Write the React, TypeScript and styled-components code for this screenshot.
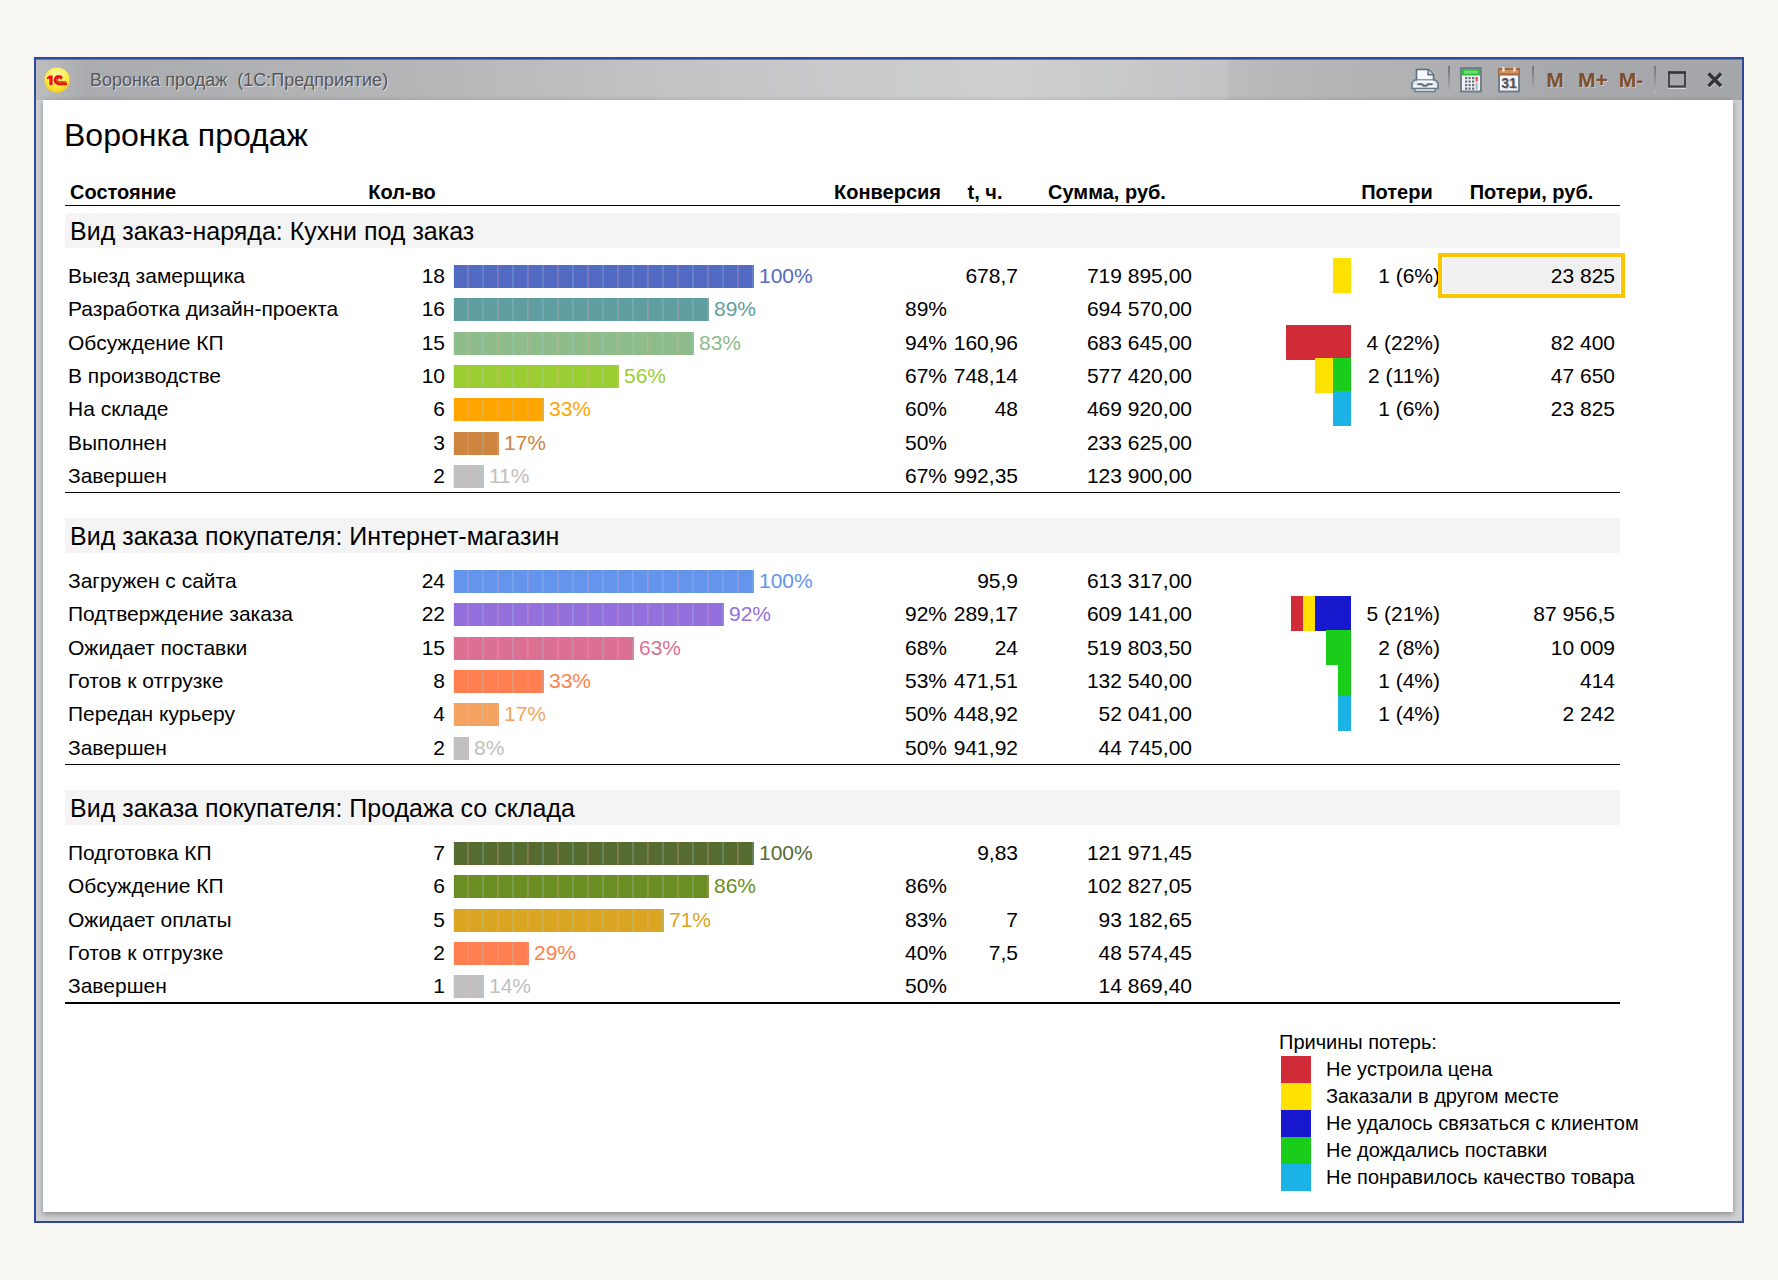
import React from "react";
import styled, { createGlobalStyle } from "styled-components";

const GlobalStyle = createGlobalStyle`
  *, *::before, *::after { box-sizing: border-box; }
  body {
    margin: 0;
    background: #f8f7f3;
    color: #000;
    font-family: "Liberation Sans", Arial, sans-serif;
    font-size: 21px;
  }
`;

const Page = styled.main`
  padding: 57px 34px;
  min-width: 1560px;
`;

const AppWindow = styled.section`
  border: 2px solid #2f4a9c;
  background: #cfd1d3;
  overflow: hidden;
`;

const TitleBar = styled.header`
  display: flex;
  align-items: center;
  height: 41px;
  padding: 0 8px;
  border-top: 1px solid #77797c;
  background: linear-gradient(
    90deg,
    #bcbdbe 0%,
    #a9abae 3%,
    #b5b6b8 22%,
    #c6c7c8 42%,
    #cfcfcf 57%,
    #c3c4c5 69.8%,
    #babbbc 70%,
    #a6a8ab 90%,
    #a5a7aa 100%
  );
`;

const WindowTitle = styled.div`
  margin-left: 20px;
  font-size: 18px;
  line-height: 24px;
  color: #56575c;
  text-shadow: 1px 1px 0 #dcdddd;
  white-space: pre;
`;

const Toolbar = styled.div`
  display: flex;
  align-items: center;
  margin-left: auto;
`;

const ToolButton = styled.button`
  display: flex;
  align-items: center;
  justify-content: center;
  width: 38px;
  height: 32px;
  padding: 0;
  border: 0;
  background: none;
  color: #7f4f2b;
  font: bold 21px/24px "Liberation Sans", Arial, sans-serif;
  text-shadow: 1px 1px 0 #c9c5c2;
`;

const Divider = styled.span`
  width: 2px;
  height: 28px;
  margin: 0 2px 0 4px;
  background: linear-gradient(#737578, #b3b4b6);
`;

const Sheet = styled.div`
  margin: 0 9px 9px 7px;
  padding: 15px 0 21px;
  background: #fff;
  box-shadow: 0 2px 6px rgba(0, 0, 0, 0.35);
`;

const ReportTitle = styled.h1`
  margin: 0 21px 20px;
  font-size: 32px;
  line-height: 40px;
  font-weight: normal;
`;

const TableArea = styled.div`
  margin: 0 113px 0 22px;
`;

const Report = styled.table`
  width: 100%;
  table-layout: fixed;
  border-collapse: separate;
  border-spacing: 0;
  border-bottom: 2px solid #000;
`;

const Column = styled.col<{ $width?: number }>`
  width: ${(p) => (p.$width ? `${p.$width}px` : "auto")};
`;

const HeadCell = styled.th<{ $align?: string }>`
  height: 30px;
  padding: 0 ${(p) => (p.$align === "left" ? 5 : 0)}px;
  vertical-align: bottom;
  text-align: ${(p) => p.$align ?? "center"};
  font-size: 20px;
  line-height: 25px;
  white-space: nowrap;
`;

const GroupCell = styled.th<{ $first: boolean }>`
  padding: ${(p) => (p.$first ? 7 : 25)}px 0 10px;
  border-top: 1px solid #000;
  text-align: left;
  font-weight: normal;
`;

const GroupBand = styled.div`
  height: 35px;
  padding-left: 5px;
  background: #f4f4f4;
  font-size: 25px;
  line-height: 36px;
`;

const Row = styled.tr`
  height: 33px;
  &:nth-child(3n),
  &:last-child {
    height: 34px;
  }
`;

const Cell = styled.td<{ $end?: number; $left?: boolean }>`
  position: relative;
  padding: 3px ${(p) => p.$end ?? 0}px 0 ${(p) => (p.$left ? 3 : 0)}px;
  vertical-align: top;
  text-align: ${(p) => (p.$left ? "left" : "right")};
  font-weight: normal;
  line-height: 30px;
  white-space: nowrap;
`;

const Funnel = styled.div<{ $color: string }>`
  display: flex;
  align-items: center;
  gap: 5px;
  height: 30px;
  padding-left: 5px;
  color: ${(p) => p.$color};
`;

const Bar = styled.span`
  height: 23px;
  border-left: 1px solid #fdeec4;
  background-color: currentColor;
  background-image: repeating-linear-gradient(
    90deg,
    transparent 0 13px,
    rgba(150, 220, 240, 0.24) 13px 14px,
    rgba(255, 160, 170, 0.22) 14px 15px
  );
`;

const LossCell = styled.td`
  padding: 0;
  vertical-align: top;
`;

const LossTiles = styled.div`
  position: relative;
  display: flex;
  justify-content: flex-end;
  height: 35px;
  margin-bottom: -2px;
`;

const LossTile = styled.span<{ $color: string }>`
  background: ${(p) => p.$color};
`;

const SelectedFill = styled.div`
  position: absolute;
  inset: 0 0 -2px 0;
  padding: 3px 5px 0 0;
  background: #f0f0f0;
  box-shadow: 0 0 0 1px #fff, 0 0 0 5px #fdc500;
`;

const Legend = styled.dl`
  width: 454px;
  margin: 25px 0 0 auto;
  line-height: 27px;
  font-size: 20px;
`;

const LegendTitle = styled.dt``;

const LegendItem = styled.dd`
  display: flex;
  gap: 15px;
  margin: 0;
`;

const Swatch = styled.span<{ $color: string }>`
  width: 30px;
  height: 27px;
  margin-left: 2px;
  background: ${(p) => p.$color};
`;

const SEGMENT = 15;

const RED = "#d02b37";
const YELLOW = "#ffe100";
const BLUE = "#1818cf";
const GREEN = "#1bcd1b";
const CYAN = "#1bb2e6";

type Tile = [color: string, width: number];
interface Stage {
  name: string;
  count: number;
  color: string;
  segments: number;
  share: string;
  conversion?: string;
  hours?: string;
  sum: string;
  tiles?: Tile[];
  loss?: string;
  lossSum?: string;
  selected?: boolean;
}

const groups: { title: string; stages: Stage[] }[] = [
  {
    title: "Вид заказ-наряда: Кухни под заказ",
    stages: [
      { name: "Выезд замерщика", count: 18, color: "#526ac1", segments: 20, share: "100%", hours: "678,7", sum: "719 895,00", tiles: [[YELLOW, 18]], loss: "1 (6%)", lossSum: "23 825", selected: true },
      { name: "Разработка дизайн-проекта", count: 16, color: "#5f9ea0", segments: 17, share: "89%", conversion: "89%", sum: "694 570,00" },
      { name: "Обсуждение КП", count: 15, color: "#8fbc8b", segments: 16, share: "83%", conversion: "94%", hours: "160,96", sum: "683 645,00", tiles: [[RED, 65]], loss: "4 (22%)", lossSum: "82 400" },
      { name: "В производстве", count: 10, color: "#9acd32", segments: 11, share: "56%", conversion: "67%", hours: "748,14", sum: "577 420,00", tiles: [[YELLOW, 18], [GREEN, 18]], loss: "2 (11%)", lossSum: "47 650" },
      { name: "На складе", count: 6, color: "#ffa500", segments: 6, share: "33%", conversion: "60%", hours: "48", sum: "469 920,00", tiles: [[CYAN, 18]], loss: "1 (6%)", lossSum: "23 825" },
      { name: "Выполнен", count: 3, color: "#cd853f", segments: 3, share: "17%", conversion: "50%", sum: "233 625,00" },
      { name: "Завершен", count: 2, color: "#c0c0c0", segments: 2, share: "11%", conversion: "67%", hours: "992,35", sum: "123 900,00" },
    ],
  },
  {
    title: "Вид заказа покупателя: Интернет-магазин",
    stages: [
      { name: "Загружен с сайта", count: 24, color: "#6495ed", segments: 20, share: "100%", hours: "95,9", sum: "613 317,00" },
      { name: "Подтверждение заказа", count: 22, color: "#9370db", segments: 18, share: "92%", conversion: "92%", hours: "289,17", sum: "609 141,00", tiles: [[RED, 12], [YELLOW, 12], [BLUE, 36]], loss: "5 (21%)", lossSum: "87 956,5" },
      { name: "Ожидает поставки", count: 15, color: "#db7093", segments: 12, share: "63%", conversion: "68%", hours: "24", sum: "519 803,50", tiles: [[GREEN, 25]], loss: "2 (8%)", lossSum: "10 009" },
      { name: "Готов к отгрузке", count: 8, color: "#ff7f50", segments: 6, share: "33%", conversion: "53%", hours: "471,51", sum: "132 540,00", tiles: [[GREEN, 13]], loss: "1 (4%)", lossSum: "414" },
      { name: "Передан курьеру", count: 4, color: "#f4a460", segments: 3, share: "17%", conversion: "50%", hours: "448,92", sum: "52 041,00", tiles: [[CYAN, 13]], loss: "1 (4%)", lossSum: "2 242" },
      { name: "Завершен", count: 2, color: "#c0c0c0", segments: 1, share: "8%", conversion: "50%", hours: "941,92", sum: "44 745,00" },
    ],
  },
  {
    title: "Вид заказа покупателя: Продажа со склада",
    stages: [
      { name: "Подготовка КП", count: 7, color: "#556b2f", segments: 20, share: "100%", hours: "9,83", sum: "121 971,45" },
      { name: "Обсуждение КП", count: 6, color: "#6b8e23", segments: 17, share: "86%", conversion: "86%", sum: "102 827,05" },
      { name: "Ожидает оплаты", count: 5, color: "#daa520", segments: 14, share: "71%", conversion: "83%", hours: "7", sum: "93 182,65" },
      { name: "Готов к отгрузке", count: 2, color: "#ff7f50", segments: 5, share: "29%", conversion: "40%", hours: "7,5", sum: "48 574,45" },
      { name: "Завершен", count: 1, color: "#c0c0c0", segments: 2, share: "14%", conversion: "50%", sum: "14 869,40" },
    ],
  },
];

const reasons: [string, string][] = [
  [RED, "Не устроила цена"],
  [YELLOW, "Заказали в другом месте"],
  [BLUE, "Не удалось связаться с клиентом"],
  [GREEN, "Не дождались поставки"],
  [CYAN, "Не понравилось качество товара"],
];

const Logo = () => (
  <svg width="26" height="26" viewBox="0 0 26 26" aria-hidden="true">
    <defs>
      <radialGradient id="logo" cx="50%" cy="30%" r="70%">
        <stop offset="0" stopColor="#fff9a8" />
        <stop offset="0.6" stopColor="#ffec45" />
        <stop offset="1" stopColor="#f5cf10" />
      </radialGradient>
    </defs>
    <circle cx="13" cy="13" r="12.6" fill="url(#logo)" />
    <path d="M3 10.2 5.6 8.6h3V18H5.4v-6.4l-2.4.6Z" fill="#e8141a" />
    <path
      d="M18 11.4a3.7 3.7 0 1 0-3.6 5.4H23"
      fill="none"
      stroke="#e8141a"
      strokeWidth="2.8"
    />
    <path d="M17.2 12.4a2 2 0 1 0-2.4 2.4H22" fill="none" stroke="#e8141a" strokeWidth="1.2" />
  </svg>
);

const PrinterIcon = () => (
  <svg width="28" height="26" viewBox="0 0 28 26" aria-hidden="true">
    <path d="M5.5 14V2.5h12l5 5V14Z" fill="#f7fafc" stroke="#5d6d7b" strokeWidth="1.6" />
    <path d="M17 2.5v5.3h5.5" fill="#c9d4dc" stroke="#5d6d7b" strokeWidth="1.4" />
    <path d="M3.5 13h21l2.5 3v5.5H1V16Z" fill="#dfe6ea" stroke="#6b7b88" strokeWidth="1.6" />
    <path d="M6 14.5h16M3 19.5h22" stroke="#fff" strokeWidth="2" />
    <path d="M6.5 17.2h4.5l1.5 1.6h3l1.5-1.6h4.5" fill="none" stroke="#5d6d7b" strokeWidth="2" />
    <path d="M4 21.5h20v3H4Z" fill="#eef3f6" stroke="#6b7b88" strokeWidth="1.4" />
  </svg>
);

const CalculatorIcon = () => (
  <svg width="22" height="26" viewBox="0 0 22 26" aria-hidden="true">
    <rect x="1" y="1" width="20" height="23.5" fill="#eff3f5" stroke="#6f7f8b" strokeWidth="2" />
    <rect x="2" y="2" width="18" height="6.5" fill="#35bd3f" />
    <rect x="4" y="3.6" width="14" height="3" fill="#6be070" />
    {[10, 13.5, 17, 20.5].map((y) =>
      [5, 8.5, 12].map((x) => (
        <rect key={`${x}-${y}`} x={x} y={y} width="2.2" height="2.2" fill="#6a7077" />
      )),
    )}
    <rect x="15.6" y="10" width="2" height="4.4" fill="#f0323a" />
    <rect x="15.6" y="16" width="2" height="6.5" fill="#a9b2b9" />
  </svg>
);

const CalendarGlyph = () => (
  <svg width="22" height="26" viewBox="0 0 22 26" aria-hidden="true">
    <rect x="1" y="2" width="20" height="22.5" fill="#f2f5f8" stroke="#6f7f8b" strokeWidth="2" />
    <rect x="0" y="1" width="22" height="7.6" rx="1.5" fill="#a5683d" />
    <rect x="1.5" y="3" width="19" height="3.4" fill="#cf9468" />
    <path d="M5.5 0v4.6M16.5 0v4.6" stroke="#f1e6dc" strokeWidth="2.2" />
    <text x="11" y="20.5" textAnchor="middle" fontSize="14" fill="#4f5357" fontFamily="Liberation Sans, sans-serif">
      31
    </text>
  </svg>
);

const MaximizeIcon = () => (
  <svg width="18" height="18" viewBox="0 0 18 18" aria-hidden="true">
    <path d="M0 17.5h18" stroke="#d4d5d6" />
    <path d="M1 2v13.5h16V2" fill="none" stroke="#3c3d3f" strokeWidth="1.8" />
    <path d="M0 1.5h18" stroke="#333436" strokeWidth="2.6" />
  </svg>
);

const CloseIcon = () => (
  <svg width="18" height="18" viewBox="0 0 18 18" aria-hidden="true">
    <path d="m3.5 4.5 12 12m0-12-12 12" stroke="#c9cacb" strokeWidth="2.4" />
    <path d="m2.5 2.5 12.5 12.5m0-12.5L2.5 15" stroke="#333436" strokeWidth="3.4" />
  </svg>
);

const StageRow = ({ stage }: { stage: Stage }) => (
  <Row>
    <Cell as="th" scope="row" $left>{stage.name}</Cell>
    <Cell $end={3}>{stage.count}</Cell>
    <Cell>
      <Funnel $color={stage.color}>
        <Bar style={{ width: stage.segments * SEGMENT + 1 }} />
        {stage.share}
      </Funnel>
    </Cell>
    <Cell $end={3}>{stage.conversion}</Cell>
    <Cell $end={2}>{stage.hours}</Cell>
    <Cell $end={2}>{stage.sum}</Cell>
    <LossCell>
      {stage.tiles && (
        <LossTiles>
          {stage.tiles.map(([color, width]) => (
            <LossTile key={color} $color={color} style={{ width }} />
          ))}
        </LossTiles>
      )}
    </LossCell>
    <Cell $end={3}>{stage.loss}</Cell>
    <Cell $end={5}>
      {stage.selected ? <SelectedFill>{stage.lossSum}</SelectedFill> : stage.lossSum}
    </Cell>
  </Row>
);

export default function App() {
  return (
    <Page>
      <GlobalStyle />
      <AppWindow>
        <TitleBar>
          <Logo />
          <WindowTitle>{"Воронка продаж  (1С:Предприятие)"}</WindowTitle>
          <Toolbar>
            <ToolButton aria-label="Печать"><PrinterIcon /></ToolButton>
            <Divider />
            <ToolButton aria-label="Калькулятор"><CalculatorIcon /></ToolButton>
            <ToolButton aria-label="Календарь"><CalendarGlyph /></ToolButton>
            <Divider />
            <ToolButton>M</ToolButton>
            <ToolButton>M+</ToolButton>
            <ToolButton>M-</ToolButton>
            <Divider />
            <ToolButton aria-label="Развернуть"><MaximizeIcon /></ToolButton>
            <ToolButton aria-label="Закрыть"><CloseIcon /></ToolButton>
          </Toolbar>
        </TitleBar>
        <Sheet>
          <ReportTitle>Воронка продаж</ReportTitle>
          <TableArea>
            <Report>
              <colgroup>
                <Column $width={291} />
                <Column $width={92} />
                <Column />
                <Column $width={125} />
                <Column $width={70} />
                <Column $width={174} />
                <Column $width={157} />
                <Column $width={92} />
                <Column $width={177} />
              </colgroup>
              <thead>
                <tr>
                  <HeadCell scope="col" $align="left">Состояние</HeadCell>
                  <HeadCell scope="col">Кол-во</HeadCell>
                  <HeadCell as="td" />
                  <HeadCell scope="col">Конверсия</HeadCell>
                  <HeadCell scope="col">t, ч.</HeadCell>
                  <HeadCell scope="col">Сумма, руб.</HeadCell>
                  <HeadCell as="td" />
                  <HeadCell scope="col">Потери</HeadCell>
                  <HeadCell scope="col">Потери, руб.</HeadCell>
                </tr>
              </thead>
              {groups.map((group, index) => (
                <tbody key={group.title}>
                  <tr>
                    <GroupCell colSpan={9} scope="colgroup" $first={index === 0}>
                      <GroupBand>{group.title}</GroupBand>
                    </GroupCell>
                  </tr>
                  {group.stages.map((stage) => (
                    <StageRow key={stage.name} stage={stage} />
                  ))}
                </tbody>
              ))}
            </Report>
          </TableArea>
          <Legend>
            <LegendTitle>Причины потерь:</LegendTitle>
            {reasons.map(([color, label]) => (
              <LegendItem key={label}>
                <Swatch $color={color} />
                {label}
              </LegendItem>
            ))}
          </Legend>
        </Sheet>
      </AppWindow>
    </Page>
  );
}
